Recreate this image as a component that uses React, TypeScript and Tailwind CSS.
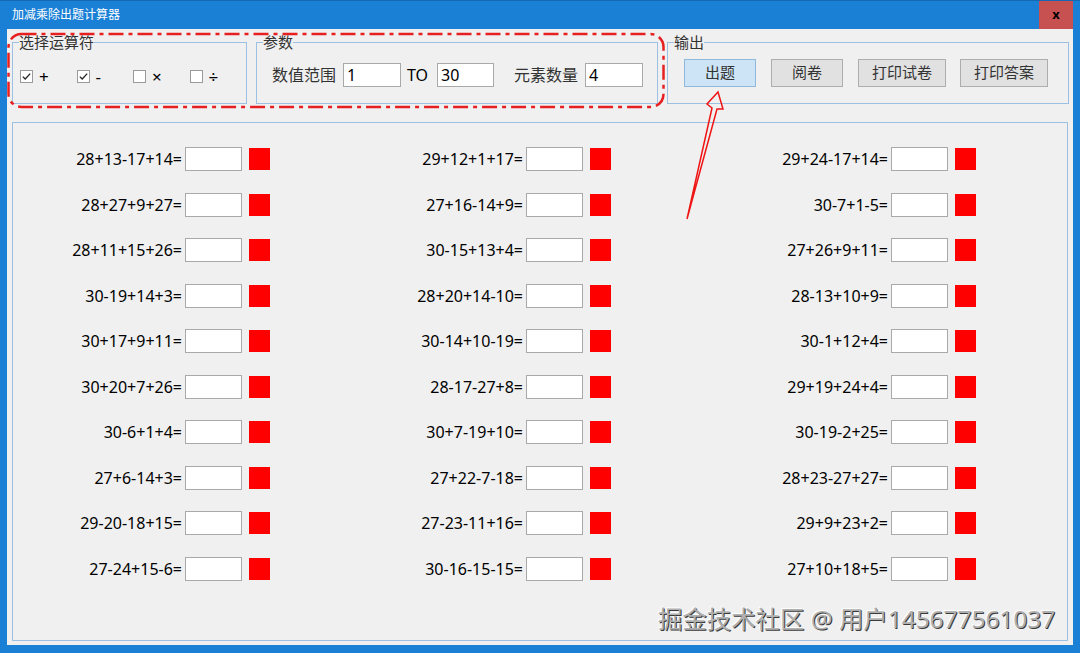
import React from "react";

const FONT = "font-['Noto_Sans','Noto_Sans_CJK_SC',sans-serif]";

const columns: string[][] = [
  [
    "28+13-17+14=",
    "28+27+9+27=",
    "28+11+15+26=",
    "30-19+14+3=",
    "30+17+9+11=",
    "30+20+7+26=",
    "30-6+1+4=",
    "27+6-14+3=",
    "29-20-18+15=",
    "27-24+15-6=",
  ],
  [
    "29+12+1+17=",
    "27+16-14+9=",
    "30-15+13+4=",
    "28+20+14-10=",
    "30-14+10-19=",
    "28-17-27+8=",
    "30+7-19+10=",
    "27+22-7-18=",
    "27-23-11+16=",
    "30-16-15-15=",
  ],
  [
    "29+24-17+14=",
    "30-7+1-5=",
    "27+26+9+11=",
    "28-13+10+9=",
    "30-1+12+4=",
    "29+19+24+4=",
    "30-19-2+25=",
    "28+23-27+27=",
    "29+9+23+2=",
    "27+10+18+5=",
  ],
];

const colWidths = ["w-[257px]", "w-[341px]", "w-[365px]"];

const operators = [
  { label: "+", checked: true },
  { label: "-", checked: true },
  { label: "×", checked: false },
  { label: "÷", checked: false },
];

function CheckBox({ checked }: { checked: boolean }) {
  return (
    <svg width="13" height="13" viewBox="0 0 13 13" className="shrink-0">
      <rect x="0.5" y="0.5" width="12" height="12" fill="#fff" stroke="#9a9a9a" />
      {checked && (
        <path d="M2.8 6.6 L5.2 9 L10.2 3.6" fill="none" stroke="#222" strokeWidth="1.3" />
      )}
    </svg>
  );
}

function TextBox({ value, className }: { value?: string; className: string }) {
  return (
    <div
      className={`h-[24px] shrink-0 border border-[#a9a9a9] bg-white pl-[3px] text-[16px] leading-[22px] text-black ${className}`}
    >
      {value}
    </div>
  );
}

function Group({
  title,
  className,
  children,
}: {
  title: string;
  className: string;
  children: React.ReactNode;
}) {
  return (
    <fieldset className={`h-[71px] min-w-0 shrink-0 overflow-hidden border border-[#9cc0e2] ${className}`}>
      <legend className="ml-[6px] text-[15px] leading-[18px] text-[#333]">{title}</legend>
      {children}
    </fieldset>
  );
}

export default function App() {
  return (
    <div className={`relative flex h-[653px] w-[1080px] flex-col overflow-hidden bg-[#1a80d6] ${FONT}`}>
      <div className="flex h-[29px] shrink-0 items-stretch justify-between border-t border-[#1468b4]">
        <span className="self-center pl-[12px] text-[12px] text-white">加减乘除出题计算器</span>
        <div className="mr-[7px] flex w-[34px] items-center justify-center bg-[#c75050] text-[13px] font-bold text-black">
          x
        </div>
      </div>

      <div className="mx-[7px] mb-[8px] flex flex-1 flex-col bg-[#f0f0f0] px-[5px] pt-[4px]">
        <div className="flex">
          <Group title="选择运算符" className="w-[235px]">
            <div className="flex h-[51px] items-center pl-[7px]">
              {operators.map((op) => (
                <div key={op.label} className="flex w-[57px] shrink items-center gap-[6px]">
                  <CheckBox checked={op.checked} />
                  <span className="text-[17px] leading-none text-black">{op.label}</span>
                </div>
              ))}
            </div>
          </Group>

          <Group title="参数" className="ml-[9px] w-[402px]">
            <div className="flex h-[48px] items-center pl-[15px] text-[16px] text-[#333]">
              <span>数值范围</span>
              <TextBox value="1" className="ml-[7px] w-[58px]" />
              <span className="ml-[6px] text-black">TO</span>
              <TextBox value="30" className="ml-[9px] w-[57px]" />
              <span className="ml-[20px]">元素数量</span>
              <TextBox value="4" className="ml-[7px] w-[58px]" />
            </div>
          </Group>

          <Group title="输出" className="ml-[9px] w-[402px]">
            <div className="flex h-[43px] items-center pl-[16px] text-[15px] text-[#333]">
              <button className="h-[28px] w-[72px] border border-[#8fb8dc] bg-[#cce4f5]">出题</button>
              <button className="ml-[15px] h-[28px] w-[72px] border border-[#adadad] bg-[#e1e1e1]">阅卷</button>
              <button className="ml-[15px] h-[28px] w-[88px] border border-[#adadad] bg-[#e1e1e1]">打印试卷</button>
              <button className="ml-[14px] h-[28px] w-[88px] border border-[#adadad] bg-[#e1e1e1]">打印答案</button>
            </div>
          </Group>
        </div>

        <div className="mb-[4px] mt-[18px] flex flex-1 border border-[#9cc0e2] pt-[24px]">
          {columns.map((col, ci) => (
            <div key={ci} className={`flex flex-col gap-y-[21.5px] ${colWidths[ci]}`}>
              {col.map((eq) => (
                <div key={eq} className="flex h-[24px] items-center justify-end">
                  <span className="text-[16px] text-black">{eq}</span>
                  <TextBox className="ml-[3px] w-[57px]" />
                  <div className="ml-[7px] h-[22px] w-[21px] bg-[#ff0000]" />
                </div>
              ))}
            </div>
          ))}
        </div>
      </div>

      <svg className="pointer-events-none absolute left-0 top-0" width="1080" height="653">
        <rect
          x="8.5"
          y="34"
          width="655"
          height="73"
          rx="13"
          fill="none"
          stroke="#e62020"
          strokeWidth="2.5"
          strokeDasharray="15 5 4 5"
        />
        <polygon
          points="687,219 712,108 707,104 718,92 723,109 717,109"
          fill="none"
          stroke="#f01515"
          strokeWidth="1.5"
          strokeLinejoin="miter"
        />
      </svg>

      <div className="pointer-events-none absolute left-[658px] top-[602px] text-[24.4px] leading-[34px] text-[#b0b0b0] [text-shadow:1px_1px_0_#3a3a3a,-1px_-1px_0_#ffffff]">
        掘金技术社区 @ 用户145677561037
      </div>
    </div>
  );
}
